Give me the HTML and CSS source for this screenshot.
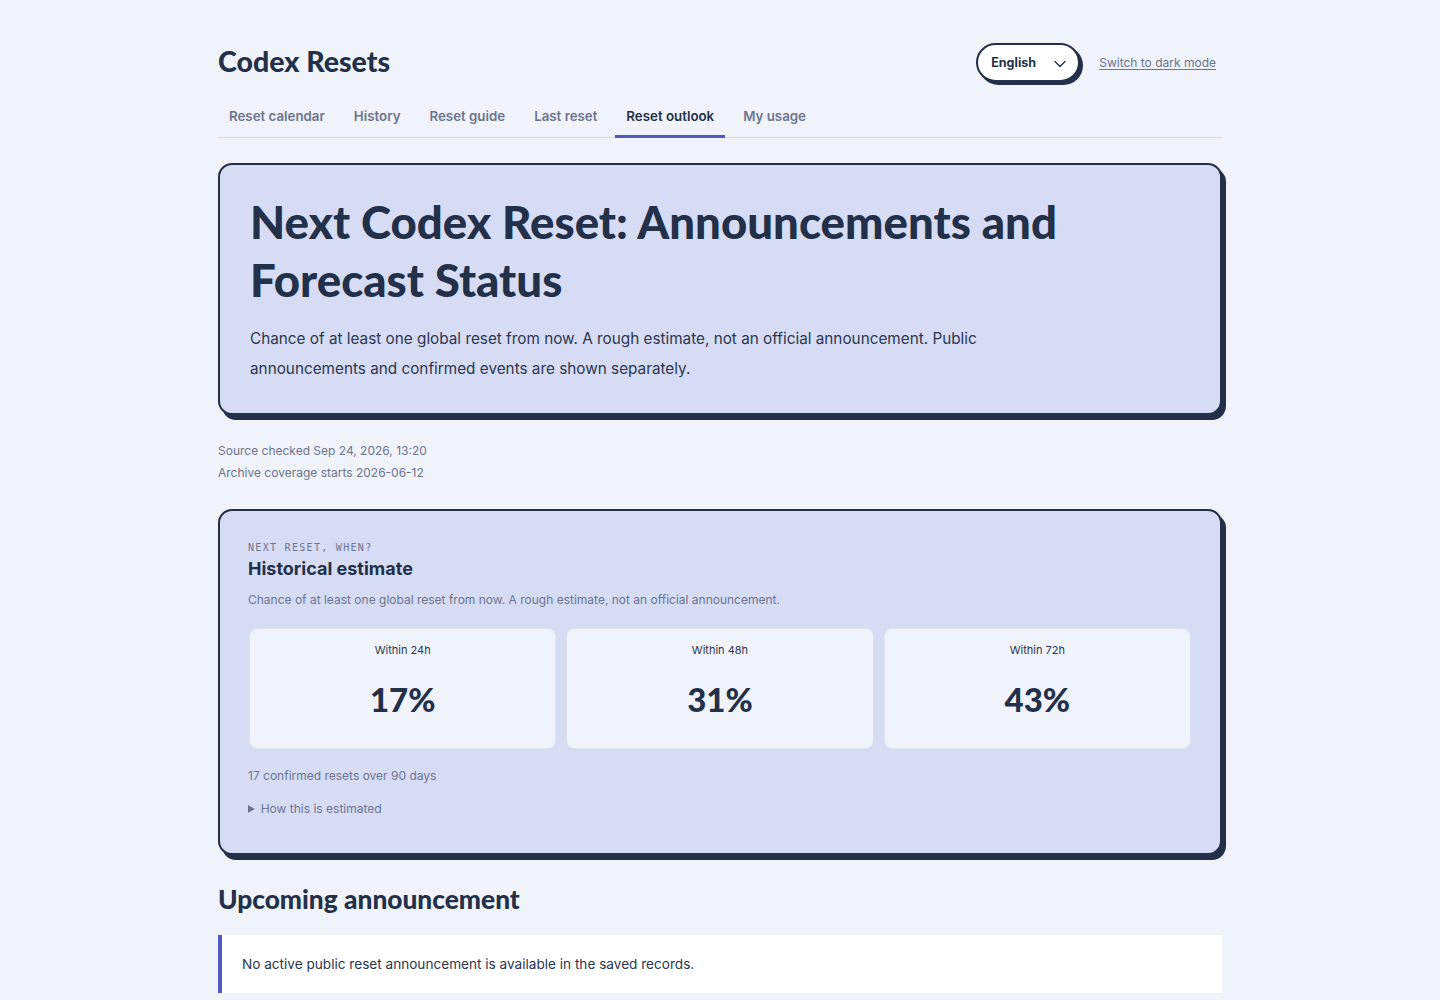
FILE: index.html
```html
<!DOCTYPE html>
<html lang="en">
<head>
<meta charset="utf-8">
<title>Next Codex Reset: Announcements and Forecast Status</title>
<link rel="stylesheet" href="styles.css">
</head>
<body>
<div class="page">
  <header class="topbar">
    <div class="brand">Codex Resets</div>
    <div class="top-actions">
      <button class="lang" type="button">
        <span>English</span>
        <svg class="chev" viewBox="0 0 12 8" width="12" height="8" aria-hidden="true"><path d="M1 1.5 L6 6.5 L11 1.5" fill="none" stroke="#22304a" stroke-width="1.4" stroke-linecap="round" stroke-linejoin="round"/></svg>
      </button>
      <a class="theme-link" href="#">Switch to dark mode</a>
    </div>
  </header>

  <nav class="tabs">
    <a class="tab" href="#">Reset calendar</a>
    <a class="tab" href="#">History</a>
    <a class="tab" href="#">Reset guide</a>
    <a class="tab" href="#">Last reset</a>
    <a class="tab active" href="#">Reset outlook</a>
    <a class="tab" href="#">My usage</a>
  </nav>

  <section class="hero card">
    <h1>Next Codex Reset: Announcements and Forecast Status</h1>
    <p class="lead">Chance of at least one global reset from now. A rough estimate, not an official announcement. Public announcements and confirmed events are shown separately.</p>
  </section>

  <div class="meta">
    <div>Source checked Sep 24, 2026, 13:20</div>
    <div>Archive coverage starts 2026-06-12</div>
  </div>

  <section class="estimate card">
    <div class="eyebrow">NEXT RESET, WHEN?</div>
    <h2 class="est-title">Historical estimate</h2>
    <p class="muted intro">Chance of at least one global reset from now. A rough estimate, not an official announcement.</p>
    <div class="stats">
      <div class="stat"><div class="stat-label">Within 24h</div><div class="stat-value">17%</div></div>
      <div class="stat"><div class="stat-label">Within 48h</div><div class="stat-value">31%</div></div>
      <div class="stat"><div class="stat-label">Within 72h</div><div class="stat-value">43%</div></div>
    </div>
    <p class="muted count">17 confirmed resets over 90 days</p>
    <details class="how">
      <summary>How this is estimated</summary>
    </details>
  </section>

  <h2 class="section-title">Upcoming announcement</h2>
  <div class="notice">No active public reset announcement is available in the saved records.</div>
</div>
</body>
</html>
```

FILE: styles.css
```css
* { box-sizing: border-box; }

html, body {
  margin: 0;
  background: #f0f3f9;
  color: #22304a;
  font-family: Inter, "Noto Sans", sans-serif;
}

.page {
  width: 1004px;
  margin: 0 auto;
  padding-top: 42px;
}

/* header */
.topbar {
  display: flex;
  justify-content: space-between;
  align-items: center;
  height: 40px;
}

.brand {
  font-family: Lato, sans-serif;
  font-weight: 900;
  font-size: 28.5px;
  color: #22304a;
  margin-top: -3px;
}

.top-actions {
  display: flex;
  align-items: center;
  gap: 19px;
  padding-right: 6px;
}

.lang {
  display: flex;
  align-items: center;
  justify-content: space-between;
  width: 104px;
  height: 39px;
  padding: 0 12px 0 13px;
  border: 2px solid #22304a;
  border-radius: 20px;
  background: #ffffff;
  box-shadow: 3px 3px 0 #22304a;
  font-family: Inter, sans-serif;
  font-size: 12.5px;
  font-weight: 700;
  color: #22304a;
}

.chev { margin-top: 3px; }

.theme-link {
  font-size: 12px;
  color: #6b7590;
  text-decoration: underline;
  text-underline-offset: 2px;
}

/* tabs */
.tabs {
  display: flex;
  gap: 7px;
  margin-top: 18px;
  border-bottom: 1px solid #d5dae5;
}

.tab {
  padding: 8px 11px 11px;
  font-size: 13.3px;
  font-weight: 600;
  color: #6b7590;
  text-decoration: none;
  border-bottom: 3px solid transparent;
  margin-bottom: -1px;
}

.tab.active {
  color: #22304a;
  border-bottom-color: #4f5bc2;
}

/* cards */
.card {
  background: #d7dcf5;
  border: 2px solid #22304a;
  border-radius: 14px;
  box-shadow: 4px 5px 0 #22304a;
}

.hero {
  margin-top: 25px;
  padding: 28px 30px 29px;
}

.hero h1 {
  margin: 0;
  font-family: Lato, sans-serif;
  font-weight: 900;
  font-size: 45.6px;
  line-height: 58px;
  color: #22304a;
}

.lead {
  margin: 15px 0 0;
  max-width: 760px;
  font-size: 15.3px;
  line-height: 30px;
  color: #2b3650;
}

.meta {
  margin-top: 25px;
  font-size: 12px;
  line-height: 22px;
  color: #6b7590;
}

.estimate {
  margin-top: 25px;
  padding: 31px 28px 37px;
}

.eyebrow {
  font-family: "DejaVu Sans Mono", "Liberation Mono", monospace;
  font-size: 10px;
  letter-spacing: 1.3px;
  color: #6b7590;
}

.est-title {
  margin: 4px 0 0;
  font-size: 18px;
  font-weight: 700;
  line-height: 24px;
  color: #22304a;
}

.muted {
  margin: 0;
  font-size: 12px;
  color: #6b7590;
}

.intro { margin-top: 11px; }

.stats {
  display: grid;
  grid-template-columns: repeat(3, 1fr);
  gap: 10px;
  margin-top: 21px;
  padding: 0 1px;
}

.stat {
  height: 121px;
  background: #f0f3f9;
  border: 1px solid #dfe3f0;
  border-radius: 8px;
  text-align: center;
  padding-top: 14px;
}

.stat-label {
  font-size: 11px;
  color: #2b3650;
}

.stat-value {
  margin-top: 22px;
  font-family: Lato, sans-serif;
  font-weight: 900;
  font-size: 33px;
  color: #22304a;
}

.count { margin-top: 19px; }

.how {
  margin-top: 18px;
  font-size: 12px;
  color: #6b7590;
}

.how summary {
  cursor: pointer;
}

.section-title {
  margin: 28px 0 0;
  font-family: Lato, sans-serif;
  font-weight: 900;
  font-size: 26.3px;
  color: #22304a;
}

.notice {
  margin-top: 20px;
  background: #ffffff;
  border-left: 4px solid #4f5bc2;
  padding: 21px 20px;
  font-size: 13.6px;
  color: #2b3650;
}
```
